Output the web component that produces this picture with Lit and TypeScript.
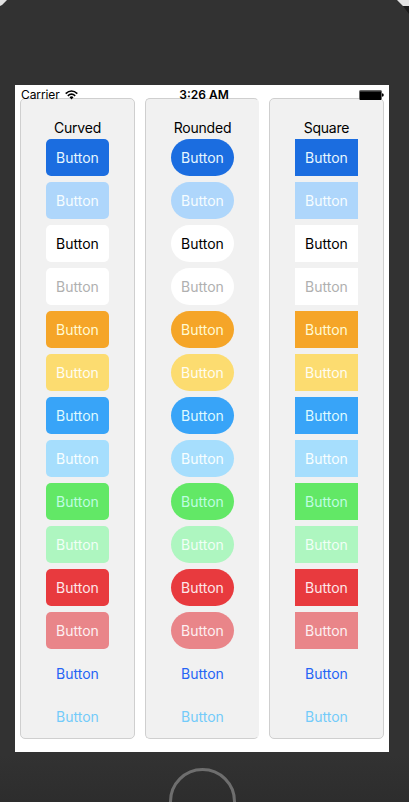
import { LitElement, html, css } from "lit";
import { customElement, property } from "lit/decorators.js";

const VARIANTS = [
  "primary", "primary-off", "plain", "plain-off", "warning", "warning-off",
  "info", "info-off", "success", "success-off", "danger", "danger-off",
  "link", "link-off",
];

@customElement("button-panel")
class ButtonPanel extends LitElement {
  @property() heading = "";
  @property() shape = "curved";

  static styles = css`
    :host { display: block; box-sizing: border-box; height: 641px; border: 1px solid #cfcfcf; border-radius: 5px; background: #f1f1f1; padding: 20px 0 0 25px; }
    :host([shape="rounded"]) { border-right-color: #f1f1f1; }
    .column { width: 63px; display: flex; flex-direction: column; align-items: center; gap: 6px; }
    .heading { height: 20px; margin-bottom: -6px; line-height: 17px; font-size: 14px; letter-spacing: -0.2px; color: #000; white-space: nowrap; }
    button { appearance: none; border: 0; margin: 0; padding: 0; width: 63px; height: 37px; flex: none; font: 400 14px/37px Inter, sans-serif; text-align: center; }
    .curved { border-radius: 5px; }
    .rounded { border-radius: 18.5px; }
    .square { border-radius: 0; }
    .primary { background: #1b6de0; color: #e6f7ff; }
    .primary-off { background: #aed6fb; color: #f6fdff; }
    .plain { background: #fff; color: #000; }
    .plain-off { background: #fff; color: #b0b0b0; }
    .warning { background: #f5a528; color: #fffad2; }
    .warning-off { background: #fcdc70; color: #fffdf0; }
    .info { background: #38a4f8; color: #defaff; }
    .info-off { background: #a6defd; color: #f8feff; }
    .success { background: #62e866; color: #bffde0; }
    .success-off { background: #aef6c0; color: #f0fff6; }
    .danger { background: #e83a3e; color: #fde6e8; }
    .danger-off { background: #e98589; color: #fdf0f1; }
    .link { background: none; color: #2564f5; }
    .link-off { background: none; color: #73cbfa; }
  `;

  render() {
    return html`<div class="column">
      <div class="heading">${this.heading}</div>
      ${VARIANTS.map((v) => html`<button class="${v} ${this.shape}">Button</button>`)}
    </div>`;
  }
}

@customElement("app-root")
class AppRoot extends LitElement {
  static styles = css`
    :host { display: block; width: 409px; height: 802px; overflow: hidden; background: linear-gradient(#e2e2e2 6px, #1c1c1c 6px); font-family: Inter, sans-serif; }
    .device { position: relative; box-sizing: border-box; height: 802px; padding: 85px 20px 0 15px; background: linear-gradient(#323232 0 755px, #2d2d2d 802px); clip-path: polygon(7px 0, 397px 0, 403px 6px, 409px 14px, 409px 802px, 0 802px, 0 6px, 2px 5px); }
    .screen { position: relative; box-sizing: border-box; width: 374px; height: 667px; background: #fff; padding: 13px 5px 0; display: grid; grid-template-columns: 115px 114px 115px; column-gap: 10px; align-items: start; }
    .status { position: absolute; inset: 0 0 auto; height: 20px; font-size: 12px; line-height: 20px; color: #000; }
    .carrier { position: absolute; left: 6px; top: 0; letter-spacing: -0.1px; }
    .wifi { position: absolute; left: 50px; top: 5px; }
    .time { position: absolute; left: 0; right: -4px; top: 0; text-align: center; font-weight: 600; }
    .battery { position: absolute; left: 344px; top: 5px; }
    .home { box-sizing: border-box; width: 67px; height: 67px; margin: 16px 0 0 154px; border: 3px solid #6e6e6e; border-radius: 50%; }
  `;

  render() {
    return html`<div class="device">
      <div class="screen">
        <button-panel heading="Curved" shape="curved"></button-panel>
        <button-panel heading="Rounded" shape="rounded"></button-panel>
        <button-panel heading="Square" shape="square"></button-panel>
        <div class="status">
          <span class="carrier">Carrier</span>
          <svg class="wifi" width="13" height="10" viewBox="0 0 13 10" fill="none" stroke="#000" stroke-width="1.6">
            <path d="M.7 3.7Q6.5-1.7 12.3 3.7M2.8 5.8Q6.5 2.3 10.2 5.8" />
            <path d="M4.5 7.3Q6.5 5.4 8.5 7.3L6.5 9.4Z" fill="#000" stroke="none" />
          </svg>
          <span class="time">3:26 AM</span>
          <svg class="battery" width="26" height="10" viewBox="0 0 26 10">
            <rect width="23" height="10" rx="1.5" fill="#666" />
            <rect x="1" y="1.5" width="21" height="8.5" fill="#000" />
            <path d="M23 3.3Q24.8 3.6 24.8 5T23 6.8Z" fill="#000" />
          </svg>
        </div>
      </div>
      <div class="home"></div>
    </div>`;
  }
}
